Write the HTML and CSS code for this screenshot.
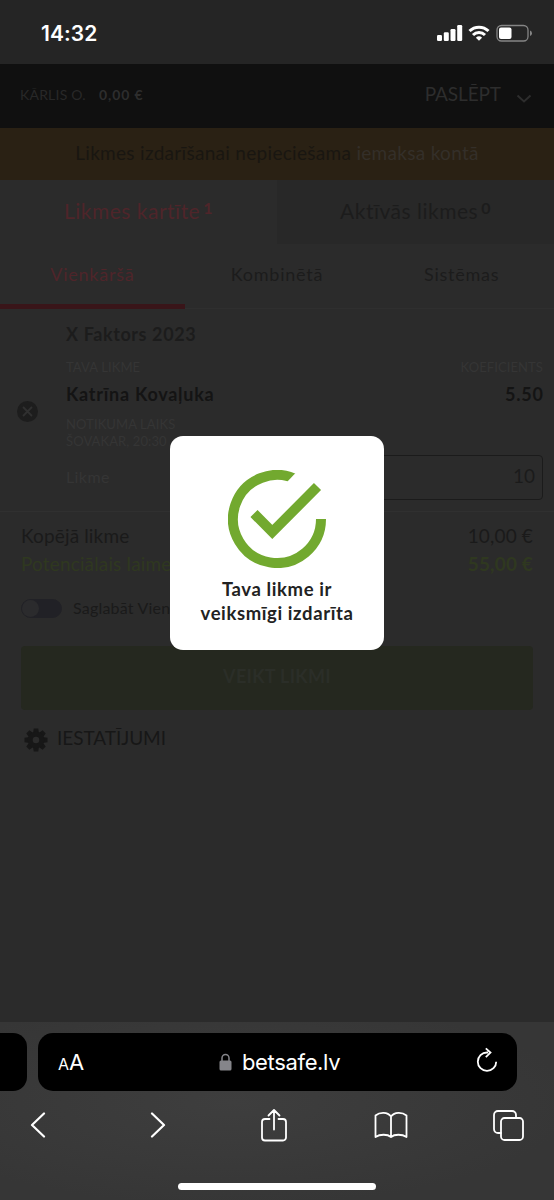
FILE: index.html
```html
<!DOCTYPE html>
<html lang="lv">
<head>
<meta charset="utf-8">
<title>betsafe.lv</title>
<link rel="stylesheet" href="styles.css">
</head>
<body>
<div class="phone">
  <div class="status">
    <span class="clock">14:32</span>
    <svg class="status-icons" width="96" height="20" viewBox="0 0 96 20">
      <g fill="#fff">
        <rect x="0" y="12" width="5" height="6" rx="1.2"/><rect x="6.8" y="9.3" width="5" height="8.7" rx="1.2"/><rect x="13.5" y="6" width="5" height="12" rx="1.2"/><rect x="20.2" y="2" width="5" height="16" rx="1.2"/>
        <path d="M42 17.8 38.9 14.700a4.500 4.500 0 0 1 6.200 0Z"/>
      </g>
      <g fill="none" stroke="#fff" stroke-width="3"><path d="M32.500 8a13.600 13.600 0 0 1 19 0"/><path d="M36 12a8.500 8.500 0 0 1 12 0"/></g>
      <rect x="60" y="2.500" width="31" height="15.500" rx="4.500" fill="none" stroke="#858585" stroke-width="1.300"/>
      <rect x="62" y="4.500" width="12.500" height="11.500" rx="2" fill="#fff"/>
      <path d="M93 7.500v5.500q2-.8 2-2.750T93 7.500Z" fill="#858585"/>
    </svg>
  </div>
  <header class="account">
    <span class="user">KĀRLIS O.</span><span class="balance">0,00 €</span>
    <span class="hide">PASLĒPT</span>
    <svg class="chev" width="16" height="10" viewBox="0 0 16 10"><path d="m1.500 1.500 6.500 6 6.500-6"/></svg>
  </header>
  <div class="notice"><span>Likmes izdarīšanai nepieciešama <a>iemaksa kontā</a></span></div>
  <nav class="tabs">
    <div class="tab active"><span>Likmes kartīte</span><b>1</b></div>
    <div class="tab other"><span>Aktīvās likmes</span><b>0</b></div>
  </nav>
  <nav class="types"><div class="on">Vienkāršā</div><div>Kombinētā</div><div>Sistēmas</div></nav>
  <section class="bet">
    <svg class="remove" width="21" height="21" viewBox="0 0 21 21"><circle cx="10.500" cy="10.500" r="10.500"/><path d="m6 6 9 9m0-9-9 9"/></svg>
    <div class="details">
      <div class="event">X Faktors 2023</div>
      <div class="caps row"><span>TAVA LIKME</span><span class="odds-label">KOEFICIENTS</span></div>
      <div class="pick row"><span>Katrīna Kovaļuka</span><span class="odds">5.50</span></div>
      <div class="caps when">NOTIKUMA LAIKS<br>ŠOVAKAR, 20:30</div>
      <div class="stake row"><span>Likme</span><div class="input">10</div></div>
    </div>
  </section>
  <section class="summary">
    <div class="sum row"><span class="sum-label">Kopējā likme</span><span class="sum-value">10,00 €</span></div>
    <div class="sum win row"><span class="win-label">Potenciālais laimests</span><b>55,00 €</b></div>
    <div class="save"><i class="toggle"></i><span>Saglabāt Vienkāršā</span></div>
    <div class="submit">VEIKT LIKMI</div>
    <div class="settings">
      <svg width="24" height="24" viewBox="-12 -12 24 24"><g><path id="t" d="M-2.300-11.500h4.600l.7 5h-6z"/><use href="#t" transform="rotate(45)"/><use href="#t" transform="rotate(90)"/><use href="#t" transform="rotate(135)"/><use href="#t" transform="rotate(180)"/><use href="#t" transform="rotate(225)"/><use href="#t" transform="rotate(270)"/><use href="#t" transform="rotate(315)"/></g><circle r="5.800" fill="none" stroke="#171717" stroke-width="5"/></svg>
      <span>IESTATĪJUMI</span>
    </div>
  </section>
  <footer class="browser">
    <div class="bar">
      <div class="prev"></div>
      <div class="address">
        <span class="aa"><small>A</small>A</span>
        <span class="site"><svg width="13" height="18" viewBox="0 0 13 18"><rect x=".5" y="7.500" width="12" height="10" rx="1.500" fill="#85858a"/><path d="M3 8V5a3.500 3.500 0 0 1 7 0v3" fill="none" stroke="#85858a" stroke-width="1.500"/></svg><span>betsafe.lv</span></span>
        <svg class="reload" width="22" height="26" viewBox="0 0 22 26"><path d="M12.200 5.500H11a9.200 9.200 0 1 0 9.200 9.200M9.800 1.300l4.700 4.300-4.700 4.500"/></svg>
      </div>
    </div>
    <div class="tools">
      <svg class="back" width="16" height="26" viewBox="0 0 16 26"><path stroke-width="2.200" d="M14 1.500 2 13l12 11.500"/></svg>
      <svg class="forward" width="16" height="26" viewBox="0 0 16 26"><path stroke-width="2.200" d="m2 1.500 12 11.500L2 24.500"/></svg>
      <svg class="share" width="26" height="34" viewBox="0 0 26 34"><path d="M8.500 11H4a3 3 0 0 0-3 3v15.500a3 3 0 0 0 3 3h18a3 3 0 0 0 3-3V14a3 3 0 0 0-3-3h-4.500M13 21.500V2M7.500 7.500 13 2l5.500 5.500"/></svg>
      <svg class="book" width="34" height="28" viewBox="0 0 34 28"><path d="M17 5.500C13.500.8 6 .8 1.500 4.500v21.500c4.500-3 12-3 15.500 0 3.500-3 11-3 15.500 0V4.500C28 .8 20.500.8 17 5.500ZM17 5.500v20.500"/></svg>
      <svg width="31" height="31" viewBox="0 0 31 31"><path d="M8 23H5a4 4 0 0 1-4-4V5a4 4 0 0 1 4-4h14a4 4 0 0 1 4 4v3"/><rect x="8" y="8" width="22" height="22" rx="3.500"/></svg>
    </div>
    <div class="home"></div>
  </footer>
  <div class="modal">
    <svg width="98" height="98" viewBox="0 0 98 98"><path d="M93 49A44 44 0 1 1 70 10.340" fill="none" stroke="#72a92f" stroke-width="10"/><path d="M58.500 12.500 68.500 2 82 8 72 22Z" fill="#fff"/><path d="m26 43.500 18.300 18.500L89.500 16.500" fill="none" stroke="#72a92f" stroke-width="10"/></svg>
    <p><span class="m1">Tava likme ir</span><br><span class="m2">veiksmīgi izdarīta</span></p>
  </div>
</div>
</body>
</html>
```
FILE: styles.css
```css
* { box-sizing: border-box; }
body { margin: 0; background: #2b2b2b; }
.phone { position: relative; width: 554px; height: 1200px; overflow: hidden; display: flex; flex-direction: column; background: #2b2b2b; font-family: Lato, "Open Sans", sans-serif; color: #1a1a1a; white-space: nowrap; }
.row { display: flex; justify-content: space-between; }
.status { height: 64px; background: #252525; display: flex; justify-content: space-between; align-items: center; padding: 2px 21px 0 41px; }
.clock { font: 600 21px Inter, sans-serif; color: #fff; letter-spacing: .1px; }
.account { height: 64px; background: #101010; display: flex; align-items: center; padding: 0 23px 3px 20px; color: #282828; }
.user { width: 79px; font-size: 14px; letter-spacing: .2px; }
.balance { font-size: 14px; font-weight: 700; letter-spacing: .9px; color: #2d2d2d; }
.hide { margin: -2px 0 0 auto; font-size: 19px; letter-spacing: -.1px; color: #2d2d2d; }
.chev { margin: 9px -1px 0 15px; fill: none; stroke: #2d2d2d; stroke-width: 2; }
.notice { height: 52px; background: #2a2114; line-height: 50px; text-align: center; font-size: 19px; letter-spacing: .3px; color: #191611; }
.notice a { color: #342f29; }
.tabs { display: flex; height: 64px; font-size: 21px; line-height: 61px; }
.tab { flex: 1; display: flex; justify-content: center; gap: 3px; letter-spacing: .5px; color: #1c1c1c; }
.tab b { font-size: 16px; line-height: 55px; }
.tab.active { color: #4f252a; }
.other { background: #282828; }
.types { display: flex; height: 65px; font-size: 18px; line-height: 61px; text-align: center; border-bottom: 1px solid #2f2f2f; letter-spacing: .75px; color: #1c1c1c; }
.types div { flex: 1; height: 65px; }
.types .on { color: #4f252a; border-bottom: 5px solid #391519; }
.bet { height: 203px; display: flex; border-bottom: 1px solid #303030; }
.remove { margin: 92px 28px 0 17px; fill: #1d1d1d; }
.remove path { stroke: #303030; stroke-width: 1.8; }
.details { flex: 1; padding: 13px 11px 0 0; }
.event { font-size: 18px; font-weight: 700; line-height: 24px; letter-spacing: .6px; color: #1c1c1c; }
.caps { font-size: 13px; line-height: 17px; margin-top: 13px; letter-spacing: .1px; color: #353535; }
.pick { margin-top: 6px; font-size: 18px; font-weight: 700; line-height: 24px; color: #141414; letter-spacing: .75px; }
.odds { margin-right: -.7px; }
.when { margin-top: 10px; }
.stake { margin-top: 5px; font-size: 16px; line-height: 43px; letter-spacing: .4px; color: #353535; }
.input { width: 200px; height: 45px; border: 1px solid #1b1b1b; border-radius: 4px; padding-right: 7px; text-align: right; font-size: 19px; line-height: 40px; letter-spacing: 0; color: #1b1b1b; }
.summary { padding: 10px 21px 0; }
.sum { font-size: 19px; line-height: 28px; letter-spacing: .15px; }
.win { color: #2f3820; }
.save { display: flex; gap: 11px; height: 20px; margin-top: 21px; line-height: 18px; font-size: 16px; letter-spacing: .2px; }
.toggle { width: 41px; height: 19px; border-radius: 10px; background: #212126; border: 1px solid #212126; }
.toggle::before { content: ""; display: block; width: 17px; height: 17px; border-radius: 50%; background: #2b2b2d; }
.submit { height: 64px; margin-top: 27px; border-radius: 4px; background: #25281f; color: #2b2e28; text-align: center; font-size: 18px; font-weight: 700; line-height: 60px; letter-spacing: .3px; }
.settings { display: flex; align-items: center; gap: 9px; margin: 18px 0 0 3px; font-size: 19px; color: #171717; fill: #171717; }
.settings span { margin-top: -6px; letter-spacing: -.05px; }
.browser { margin-top: auto; height: 178px; background: radial-gradient(ellipse at 42% 45%, #3e3e3e, #363636 75%); }
.bar { display: flex; gap: 11px; padding-top: 11px; }
.prev { width: 27px; height: 58px; background: #000; border-radius: 0 14px 14px 0; }
.address { width: 479px; height: 58px; background: #000; border-radius: 15px; display: flex; align-items: center; justify-content: space-between; padding: 0 19px 0 20px; color: #fff; font: 22px Inter, sans-serif; }
.aa small { font-size: 16px; }
.site { display: flex; align-items: center; gap: 10px; margin-left: -1px; letter-spacing: -.35px; }
.reload { fill: none; stroke: #fff; stroke-width: 1.8; margin-bottom: 4px; }
.tools { height: 68px; display: flex; align-items: center; padding: 0 30px; fill: none; stroke: #fff; stroke-width: 1.8; stroke-linecap: round; stroke-linejoin: round; }
.back { margin-right: 104px; }
.forward { margin-right: 95px; }
.share { margin-right: 87px; }
.book { margin-right: 85px; }
.home { width: 198px; height: 7px; margin: 24px auto 0; border-radius: 4px; background: #fff; }
.modal { position: absolute; left: 170px; top: 436px; width: 214px; height: 214px; border-radius: 13px; background: #fff; padding-top: 34px; text-align: center; color: #222; }
.modal svg { display: block; margin: 0 auto; }
.modal p { margin: 9px 0 0; font-size: 18.5px; font-weight: 700; line-height: 24px; letter-spacing: .6px; }
```
